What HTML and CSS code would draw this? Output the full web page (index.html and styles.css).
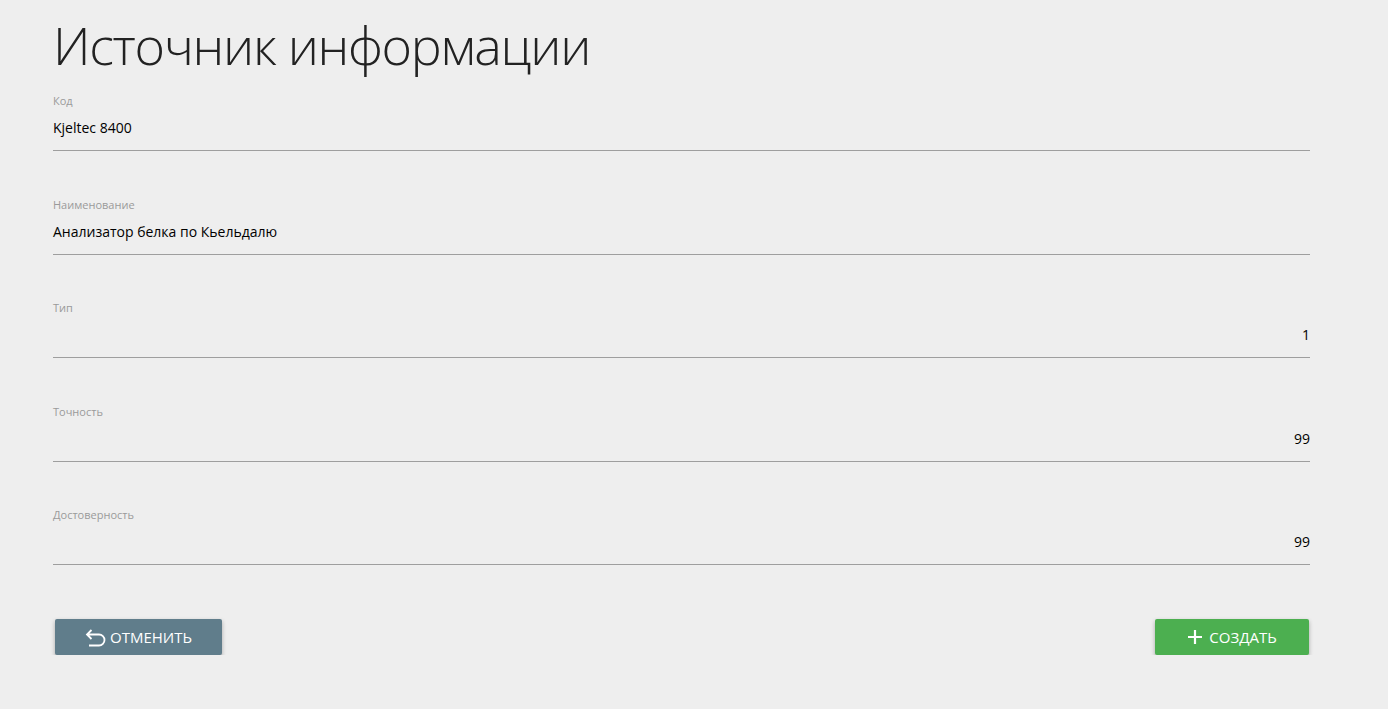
FILE: index.html
```html
<!DOCTYPE html>
<html lang="ru">
<head>
    <meta name="viewport" content="width=device-width, initial-scale=1">
    <title>Источник информации</title>
    <link rel="stylesheet" href="styles.css">
</head>
<body>
    <div class="page">
        <h1>Источник информации</h1>

        <div class="field">
            <label>Код</label>
            <div class="value">Kjeltec 8400</div>
        </div>
        <div class="field">
            <label>Наименование</label>
            <div class="value">Анализатор белка по Кьельдалю</div>
        </div>
        <div class="field">
            <label>Тип</label>
            <div class="value num">1</div>
        </div>
        <div class="field">
            <label>Точность</label>
            <div class="value num">99</div>
        </div>
        <div class="field">
            <label>Достоверность</label>
            <div class="value num">99</div>
        </div>

        <div class="actions">
            <button class="btn btn-cancel">
                <svg width="21" height="19" viewBox="0 0 21 19"><path d="M6.5 2 L2 6.5 L6.5 11 M2 6.5 H14 a5.5 5.5 0 0 1 0 11 H4" fill="none" stroke="white" stroke-width="1.8"/></svg>
                ОТМЕНИТЬ
            </button>
            <button class="btn btn-create">
                <svg width="16" height="16" viewBox="0 0 16 16"><path d="M8 1 V15 M1 8 H15" stroke="white" stroke-width="2.2"/></svg>
                СОЗДАТЬ
            </button>
        </div>
    </div>
</body>
</html>
```

FILE: styles.css
```css
body {
    margin: 0;
    background-color: #eeeeee;
    font-family: "Open Sans", "Noto Sans", sans-serif;
    color: #000;
}
.page {
    padding: 0 78px 0 53px;
}
h1 {
    margin: 0;
    padding-top: 7px;
    height: 76px;
    font-size: 52px;
    font-weight: 300;
    color: #222;
    letter-spacing: -1.3px;
    line-height: 76px;
}
.field {
    height: 103.5px;
    display: flex;
    flex-direction: column;
    justify-content: flex-end;
    box-sizing: border-box;
    border-bottom: 1px solid #9e9e9e;
}
.field:first-of-type {
    height: 68px;
}
.field label {
    font-size: 11px;
    color: #9a9a9a;
    line-height: 16px;
    margin-bottom: 3px;
}
.value {
    font-size: 14px;
    line-height: 20px;
    padding: 6px 0 12px;
}
.num {
    text-align: right;
}
.actions {
    display: flex;
    justify-content: space-between;
    padding: 54px 1px 0 2px;
}
.btn {
    height: 36px;
    border: none;
    border-radius: 2px;
    color: white;
    font-family: "Open Sans", sans-serif;
    font-size: 15px;
    display: flex;
    align-items: center;
    justify-content: center;
    gap: 4px;
    box-shadow: 0 2px 4px rgba(0, 0, 0, 0.3);
    cursor: pointer;
}
.btn-cancel {
    background-color: #607d8b;
    width: 167px;
}
.btn-create {
    background-color: #4caf50;
    width: 154px;
    gap: 6px;
}
```
